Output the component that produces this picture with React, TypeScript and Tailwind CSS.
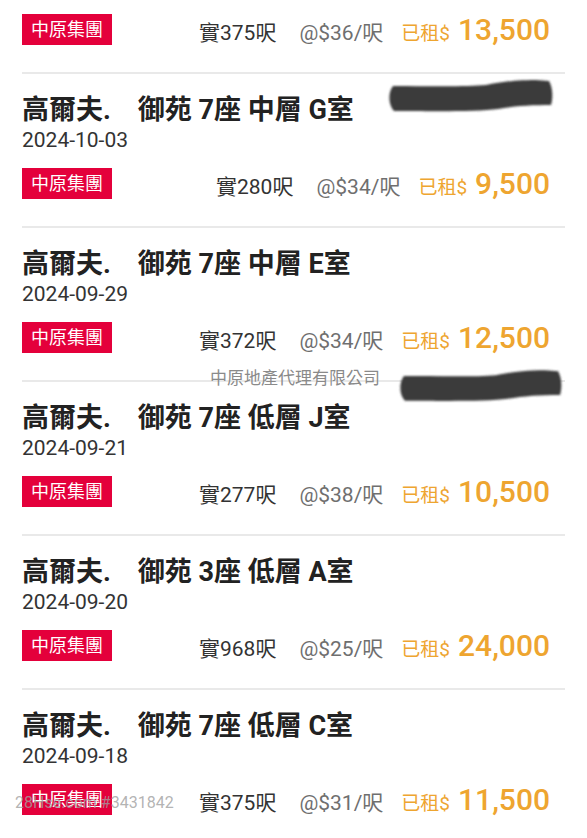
import React from 'react';

interface Listing {
  title?: string;
  date?: string;
  area: number;
  unitPrice: number;
  rent: string;
}

const listings: Listing[] = [
  { area: 375, unitPrice: 36, rent: '13,500' },
  { title: '高爾夫.\u3000御苑 7座 中層 G室', date: '2024-10-03', area: 280, unitPrice: 34, rent: '9,500' },
  { title: '高爾夫.\u3000御苑 7座 中層 E室', date: '2024-09-29', area: 372, unitPrice: 34, rent: '12,500' },
  { title: '高爾夫.\u3000御苑 7座 低層 J室', date: '2024-09-21', area: 277, unitPrice: 38, rent: '10,500' },
  { title: '高爾夫.\u3000御苑 3座 低層 A室', date: '2024-09-20', area: 968, unitPrice: 25, rent: '24,000' },
  { title: '高爾夫.\u3000御苑 7座 低層 C室', date: '2024-09-18', area: 375, unitPrice: 31, rent: '11,500' },
];

function Scribble({ className }: { className: string }) {
  // redaction marker stroke
  return (
    <svg className={className} viewBox="0 0 170 36" fill="none">
      <defs>
        <filter id="soft" x="-10%" y="-30%" width="120%" height="160%">
          <feGaussianBlur stdDeviation="1.3" />
        </filter>
      </defs>
      <path
        d="M7 8 C40 8 80 9 100 7 C116 4 128 2 150 2 L163 3 C167 10 167 20 165 27 C145 27 128 28 112 31 C92 34 40 33 8 33 C2 27 2 14 7 8 Z"
        fill="#3a3a3a"
        filter="url(#soft)"
      />
    </svg>
  );
}

function ListingRow({ item, first }: { item: Listing; first: boolean }) {
  return (
    <div
      className={
        first
          ? 'mx-[22px] pt-[14px] pb-[27px]'
          : 'mx-[22px] border-t-2 border-[#e9e9e9] pt-[20px] pb-[27px]'
      }
    >
      {item.title && (
        <>
          <h2 className="text-[27px] leading-[32px] font-bold text-[#222] whitespace-nowrap">
            {item.title}
          </h2>
          <p className="text-[21px] leading-[28px] text-[#333]">{item.date}</p>
        </>
      )}
      <div className={item.title ? 'flex items-center h-[31px] mt-[14px] pr-[15px]' : 'flex items-center h-[31px] pr-[15px]'}>
        <span className="bg-[#e4003b] text-white text-[18px] leading-[31px] h-[31px] px-[9px]">
          中原集團
        </span>
        <div className="flex-1 flex items-baseline justify-end">
          <span className="text-[21px] text-[#333]">實{item.area}呎</span>
          <span className="text-[21px] text-[#6f6f6f] ml-[23px]">@${item.unitPrice}/呎</span>
          <span className="text-[19px] text-[#eea530] ml-[18px]">已租$</span>
          <span className="text-[30px] text-[#eea530] ml-[8px] font-medium">{item.rent}</span>
        </div>
      </div>
    </div>
  );
}

export default function App() {
  return (
    <div
      className="relative w-[587px] h-[838px] overflow-hidden bg-white"
      style={{ fontFamily: 'Roboto, "Noto Sans CJK TC", sans-serif' }}
    >
      {listings.map((item, i) => (
        <ListingRow key={i} item={item} first={i === 0} />
      ))}

      {/* overlays: redaction strokes and watermarks */}
      <Scribble className="absolute left-[385px] top-[78px] w-[172px] h-[36px]" />
      <Scribble className="absolute left-[397px] top-[367px] w-[168px] h-[38px]" />
      <span className="absolute left-[210px] top-[366px] text-[17px] leading-[24px] text-[#8a8a8a]">
        中原地產代理有限公司
      </span>
      <span className="absolute left-[15px] top-[792px] text-[16px] leading-[22px] text-[#a0a0a0]/80">
        28Hse.com #3431842
      </span>
    </div>
  );
}
